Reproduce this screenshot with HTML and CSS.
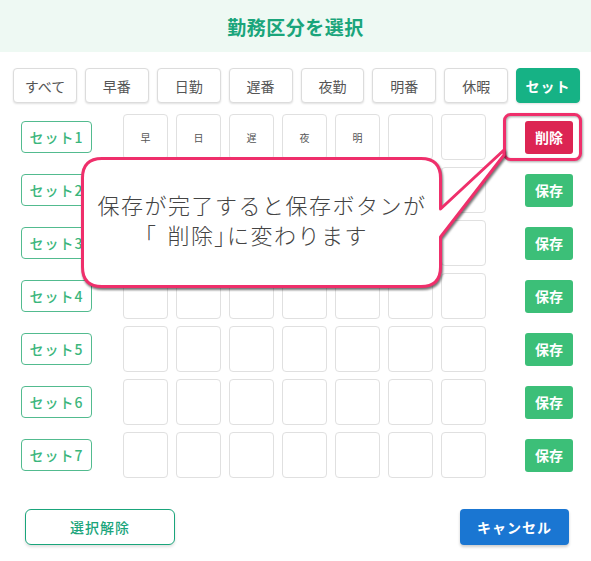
FILE: index.html
```html
<!DOCTYPE html>
<html lang="ja">
<head>
<meta charset="utf-8">
<link rel="stylesheet" href="styles.css">
</head>
<body>
<div class="page">
  <header class="header">勤務区分を選択</header>
  <div class="filters">
    <button class="filter">すべて</button>
    <button class="filter">早番</button>
    <button class="filter">日勤</button>
    <button class="filter">遅番</button>
    <button class="filter">夜勤</button>
    <button class="filter">明番</button>
    <button class="filter">休暇</button>
    <button class="filter active">セット</button>
  </div>
  <div class="rows">
    <div class="row">
      <div class="label">セット1</div>
      <div class="cells">
        <div class="cell">早</div><div class="cell">日</div><div class="cell">遅</div><div class="cell">夜</div><div class="cell">明</div><div class="cell"></div><div class="cell"></div>
      </div>
      <button class="act delete">削除</button>
    </div>
    <div class="row">
      <div class="label">セット2</div>
      <div class="cells"><div class="cell"></div><div class="cell"></div><div class="cell"></div><div class="cell"></div><div class="cell"></div><div class="cell"></div><div class="cell"></div></div>
      <button class="act save">保存</button>
    </div>
    <div class="row">
      <div class="label">セット3</div>
      <div class="cells"><div class="cell"></div><div class="cell"></div><div class="cell"></div><div class="cell"></div><div class="cell"></div><div class="cell"></div><div class="cell"></div></div>
      <button class="act save">保存</button>
    </div>
    <div class="row">
      <div class="label">セット4</div>
      <div class="cells"><div class="cell"></div><div class="cell"></div><div class="cell"></div><div class="cell"></div><div class="cell"></div><div class="cell"></div><div class="cell"></div></div>
      <button class="act save">保存</button>
    </div>
    <div class="row">
      <div class="label">セット5</div>
      <div class="cells"><div class="cell"></div><div class="cell"></div><div class="cell"></div><div class="cell"></div><div class="cell"></div><div class="cell"></div><div class="cell"></div></div>
      <button class="act save">保存</button>
    </div>
    <div class="row">
      <div class="label">セット6</div>
      <div class="cells"><div class="cell"></div><div class="cell"></div><div class="cell"></div><div class="cell"></div><div class="cell"></div><div class="cell"></div><div class="cell"></div></div>
      <button class="act save">保存</button>
    </div>
    <div class="row">
      <div class="label">セット7</div>
      <div class="cells"><div class="cell"></div><div class="cell"></div><div class="cell"></div><div class="cell"></div><div class="cell"></div><div class="cell"></div><div class="cell"></div></div>
      <button class="act save">保存</button>
    </div>
  </div>
  <div class="footer">
    <button class="clear">選択解除</button>
    <button class="cancel">キャンセル</button>
  </div>

  <svg class="annot" width="591" height="561" viewBox="0 0 591 561">
    <rect class="hl" x="504.5" y="114.5" width="76" height="45" rx="6" ry="6"/>
    <path class="bubble" d="M102 158.5 H421 Q440.5 158.5 440.5 178 V209 L504 150 L504 155 L440.5 237 V267 Q440.5 286.5 421 286.5 H102 Q82.5 286.5 82.5 267 V178 Q82.5 158.5 102 158.5 Z"/>
  </svg>
  <div class="callout-text">
    <div class="callout-lines">
      <span class="line">保存が完了すると保存ボタンが</span>
      <span class="line line2"><span class="open">「</span>削除<span class="prop">」</span>に変わります</span>
    </div>
  </div>
</div>
</body>
</html>
```
FILE: styles.css
```css
* { box-sizing: border-box; }
html, body { margin: 0; padding: 0; background: #fff; }
body {
  font-family: "Noto Sans CJK JP", "Noto Sans", sans-serif;
  width: 591px;
  height: 561px;
  overflow: hidden;
}
.page { position: relative; width: 591px; height: 561px; }
button { font-family: inherit; cursor: pointer; }

.header {
  height: 52px;
  background: #eef9f3;
  color: #1aa57b;
  font-size: 19px;
  font-weight: 700;
  display: flex;
  align-items: center;
  justify-content: center;
  letter-spacing: 0.5px;
}

.filters {
  display: flex;
  gap: 8px;
  padding: 16px 11px 0 13px;
}
.filter {
  flex: 1;
  height: 35px;
  background: #fff;
  border: 1px solid #dcdcdc;
  border-radius: 4px;
  box-shadow: 0 1px 2px rgba(0,0,0,0.12);
  color: #555;
  font-size: 14px;
  padding: 0;
}
.filter.active {
  background: #16b285;
  border-color: #16b285;
  color: #fff;
  font-weight: 700;
  letter-spacing: 1px;
}

.rows {
  display: flex;
  flex-direction: column;
  gap: 7px;
  margin-top: 11px;
  padding-left: 21px;
}
.row {
  display: flex;
  align-items: center;
  height: 46px;
}
.label {
  width: 71px;
  height: 32px;
  border: 1px solid #52bb8f;
  border-radius: 4px;
  color: #3cb67c;
  font-size: 14px;
  font-weight: 500;
  display: flex;
  align-items: center;
  justify-content: center;
  letter-spacing: 1px;
  padding-bottom: 1px;
}
.cells {
  display: flex;
  gap: 8px;
  margin-left: 31px;
}
.cell {
  width: 45px;
  height: 46px;
  border: 1px solid #e0e0e0;
  border-radius: 4px;
  display: flex;
  align-items: center;
  justify-content: center;
  font-size: 10px;
  color: #555;
}
.act {
  margin-left: 39px;
  width: 48px;
  height: 33px;
  border: none;
  border-radius: 3px;
  color: #fff;
  font-size: 14px;
  font-weight: 700;
  padding: 0;
}
.act.delete { background: #dc2553; }
.act.save { background: #3cbf78; }

.footer {
  display: flex;
  justify-content: space-between;
  padding: 0 22px 0 25px;
  margin-top: 31px;
}
.clear {
  width: 150px;
  height: 36px;
  background: #fff;
  border: 1px solid #1aa57b;
  border-radius: 6px;
  color: #1aa57b;
  font-size: 14px;
  font-weight: 500;
  box-shadow: 0 2px 3px rgba(0,0,0,0.12);
  letter-spacing: 1px;
}
.cancel {
  width: 109px;
  height: 36px;
  background: #1a76d2;
  border: none;
  border-radius: 4px;
  color: #fff;
  font-size: 14px;
  font-weight: 700;
  box-shadow: 0 2px 3px rgba(0,0,0,0.2);
  letter-spacing: 1px;
}

.annot {
  position: absolute;
  left: 0;
  top: 0;
  pointer-events: none;
}
.hl {
  fill: none;
  stroke: #ef2f6b;
  stroke-width: 3;
  filter: drop-shadow(1px 1px 1px rgba(0,0,0,0.35));
}
.bubble {
  fill: #fff;
  stroke: #ef2f6b;
  stroke-width: 3;
  stroke-linejoin: round;
  filter: drop-shadow(1px 2px 1px rgba(0,0,0,0.55));
}
.callout-text {
  position: absolute;
  left: 82px;
  top: 157px;
  width: 360px;
  height: 131px;
  display: flex;
  align-items: center;
  justify-content: center;
  padding-bottom: 8px;
}
.callout-lines {
  display: flex;
  flex-direction: column;
  align-items: center;
  font-size: 22px;
  font-weight: 300;
  line-height: 30px;
  letter-spacing: 1.5px;
  color: #444;
}
.line { display: block; white-space: nowrap; }
.line2 { padding-right: 22px; }
.open { margin-right: 10px; }
.prop { font-feature-settings: "palt"; }
```
